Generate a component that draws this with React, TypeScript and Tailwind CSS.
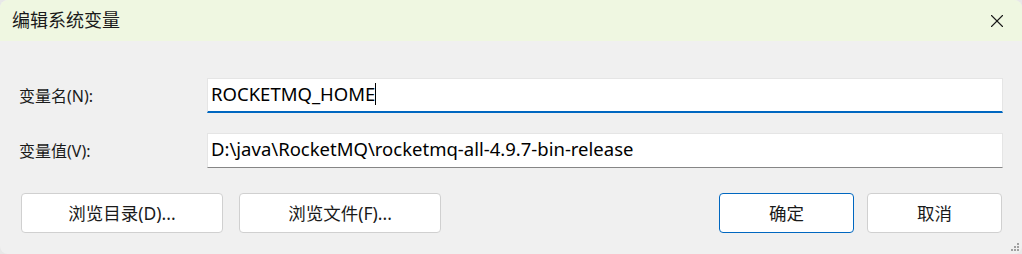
import { X } from "lucide-react";

const font = { fontFamily: '"Noto Sans", "Noto Sans CJK SC", sans-serif' };

function Field({ label, value, focused }: { label: string; value: string; focused?: boolean }) {
  return (
    <div className="flex items-center h-[35px]">
      <label className="w-[188px] text-[16px] text-[#1a1a1a]">{label}</label>
      <div
        className={
          "flex-1 h-full bg-white border border-[#e5e5e5] flex items-center pl-[3px] pb-[3px] text-[18.5px] text-black " +
          (focused ? "border-b-2 border-b-[#0067c0]" : "border-b-[#868686]")
        }
      >
        <span>{value}</span>
        {focused && <span className="w-px h-[22px] bg-black" />}
      </div>
    </div>
  );
}

function Btn({ children, primary }: { children: React.ReactNode; primary?: boolean }) {
  return (
    <button
      className={
        "w-full h-[40px] rounded-[4px] bg-white text-[17.5px] text-[#1a1a1a] flex items-center justify-center " +
        (primary ? "border border-[#0067c0]" : "border border-[#d0d0d0]")
      }
    >
      {children}
    </button>
  );
}

export default function App() {
  return (
    <div className="w-[1022px] h-[254px] bg-[#e8e8e8]" style={font}>
      <div className="w-full h-full rounded-[8px] overflow-hidden bg-[#f0f0f0] flex flex-col relative">
        {/* Title bar */}
        <div className="h-[41px] bg-[#eff7e1] flex items-center justify-between pl-[12px] pr-[14px]">
          <span className="text-[18px] text-[#1a1a1a]">编辑系统变量</span>
          <X className="w-[22px] h-[22px] text-[#1a1a1a]" strokeWidth={1.2} />
        </div>

        {/* Fields */}
        <div className="flex flex-col gap-[20px] pl-[19px] pr-[19px] pt-[37px]">
          <Field label="变量名(N):" value="ROCKETMQ_HOME" focused />
          <Field label="变量值(V):" value="D:\java\RocketMQ\rocketmq-all-4.9.7-bin-release" />
        </div>

        {/* Buttons */}
        <div className="flex items-center pl-[21px] pr-[20px] pt-[25px]">
          <div className="w-[202px]"><Btn>浏览目录(D)...</Btn></div>
          <div className="w-[202px] ml-[16px]"><Btn>浏览文件(F)...</Btn></div>
          <div className="flex-1" />
          <div className="w-[135px]"><Btn primary>确定</Btn></div>
          <div className="w-[135px] ml-[13px]"><Btn>取消</Btn></div>
        </div>

        {/* Resize grip */}
        <svg className="absolute right-[2px] bottom-[2px]" width="10" height="10" viewBox="0 0 10 10">
          <rect x="7" y="1" width="2" height="2" fill="#a0a0a0" />
          <rect x="4" y="4" width="2" height="2" fill="#a0a0a0" />
          <rect x="7" y="4" width="2" height="2" fill="#a0a0a0" />
          <rect x="1" y="7" width="2" height="2" fill="#a0a0a0" />
          <rect x="4" y="7" width="2" height="2" fill="#a0a0a0" />
          <rect x="7" y="7" width="2" height="2" fill="#a0a0a0" />
        </svg>
      </div>
    </div>
  );
}
